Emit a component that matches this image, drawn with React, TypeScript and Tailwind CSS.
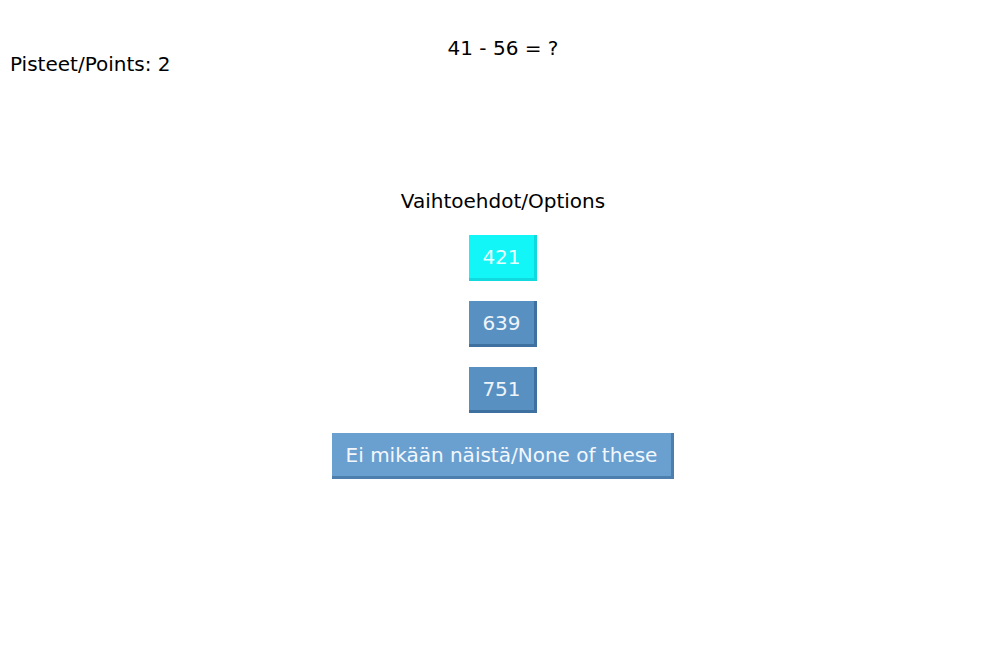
import React from 'react';

// 선택지 데이터
const options = ['421', '639', '751'];

const App = () => {
  const font = { fontFamily: '"DejaVu Sans", Verdana, sans-serif' };

  return (
    <div className="w-[991px] h-[650px] bg-white text-black" style={font}>
      {/* 문제 */}
      <div className="pl-[15px] pt-[41px] text-center text-[20px] leading-[14px]">41 - 56 = ?</div>
      {/* 점수 */}
      <div className="pl-[10px] mt-[2px] text-[20px] leading-[14px]">Pisteet/Points: 2</div>

      <div className="flex flex-col items-center pl-[15px] mt-[123px]">
        <div className="text-[20px] leading-[14px]">Vaihtoehdot/Options</div>

        <div className="flex flex-col items-center gap-[20px] mt-[27px]">
          {options.map((o, i) => (
            <button
              key={o}
              className={`h-[46px] px-[13.5px] text-[20px] border-r-[3px] border-b-[3px] ${
                i === 0
                  ? 'bg-[#12f6f8] border-[#10dadd] text-[#e6ffff]'
                  : 'bg-[#5890c2] border-[#3f71a0] text-[#eef4fa]'
              }`}
            >
              {o}
            </button>
          ))}
          <button className="h-[46px] px-[14px] text-[20px] bg-[#6aa0d0] border-r-[3px] border-b-[3px] border-[#4c7fae] text-[#f2f7fc]">
            Ei mikään näistä/None of these
          </button>
        </div>
      </div>
    </div>
  );
};

export default App;
